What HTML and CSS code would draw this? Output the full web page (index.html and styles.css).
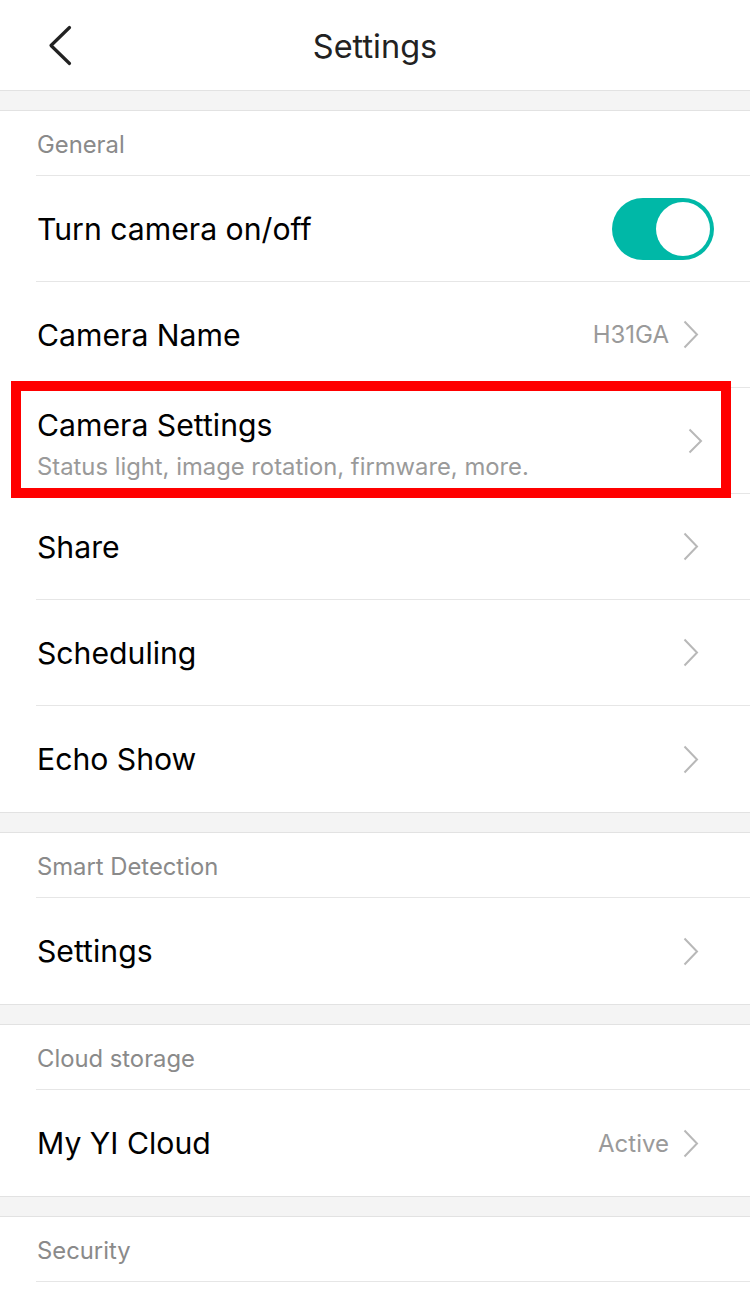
FILE: index.html
```html
<!DOCTYPE html>
<html>
<head>
<meta charset="utf-8">
<link rel="stylesheet" href="styles.css">
</head>
<body>
<div class="page">
  <header class="topbar">
    <svg class="back" width="24" height="41" viewBox="0 0 24 41"><polyline points="21.5,2.5 3,20.5 21.5,38.5" fill="none" stroke="#222" stroke-width="3.2" stroke-linecap="round" stroke-linejoin="round"/></svg>
    <h1 class="title">Settings</h1>
  </header>

  <div class="gap"></div>
  <section class="section">
    <div class="sec-title">General</div>
    <div class="row">
      <span class="label">Turn camera on/off</span>
      <div class="toggle"><div class="knob"></div></div>
    </div>
    <div class="row nav">
      <span class="label">Camera Name</span>
      <span class="value">H31GA</span>
      <svg class="chev" width="16" height="29" viewBox="0 0 16 29"><polyline points="1.5,1.5 14,14.5 1.5,27.5" fill="none" stroke="#b8b8b8" stroke-width="2"/></svg>
    </div>
    <div class="row nav highlighted">
      <div class="stack">
        <span class="label">Camera Settings</span>
        <span class="sub">Status light, image rotation, firmware, more.</span>
      </div>
      <svg class="chev chev-sm" width="15" height="26" viewBox="0 0 15 26"><polyline points="1.5,1.5 13,13 1.5,24.5" fill="none" stroke="#b8b8b8" stroke-width="2"/></svg>
      <div class="mark"></div>
    </div>
    <div class="row nav">
      <span class="label">Share</span>
      <svg class="chev" width="16" height="29" viewBox="0 0 16 29"><polyline points="1.5,1.5 14,14.5 1.5,27.5" fill="none" stroke="#b8b8b8" stroke-width="2"/></svg>
    </div>
    <div class="row nav">
      <span class="label">Scheduling</span>
      <svg class="chev" width="16" height="29" viewBox="0 0 16 29"><polyline points="1.5,1.5 14,14.5 1.5,27.5" fill="none" stroke="#b8b8b8" stroke-width="2"/></svg>
    </div>
    <div class="row nav">
      <span class="label">Echo Show</span>
      <svg class="chev" width="16" height="29" viewBox="0 0 16 29"><polyline points="1.5,1.5 14,14.5 1.5,27.5" fill="none" stroke="#b8b8b8" stroke-width="2"/></svg>
    </div>
  </section>

  <div class="gap"></div>
  <section class="section">
    <div class="sec-title">Smart Detection</div>
    <div class="row nav">
      <span class="label">Settings</span>
      <svg class="chev" width="16" height="29" viewBox="0 0 16 29"><polyline points="1.5,1.5 14,14.5 1.5,27.5" fill="none" stroke="#b8b8b8" stroke-width="2"/></svg>
    </div>
  </section>

  <div class="gap"></div>
  <section class="section">
    <div class="sec-title">Cloud storage</div>
    <div class="row nav">
      <span class="label">My YI Cloud</span>
      <span class="value">Active</span>
      <svg class="chev" width="16" height="29" viewBox="0 0 16 29"><polyline points="1.5,1.5 14,14.5 1.5,27.5" fill="none" stroke="#b8b8b8" stroke-width="2"/></svg>
    </div>
  </section>

  <div class="gap"></div>
  <section class="section last">
    <div class="sec-title">Security</div>
    <div class="row empty"></div>
  </section>
</div>
</body>
</html>
```

FILE: styles.css
```css
* { box-sizing: border-box; }
html, body { margin: 0; padding: 0; background: #fff; }
body {
  font-family: "Inter", "Liberation Sans", Arial, sans-serif;
  color: #000;
  width: 750px;
  overflow: hidden;
}
.page { width: 750px; }

.topbar {
  height: 91px;
  border-bottom: 1px solid #e2e2e2;
  display: flex;
  align-items: center;
  justify-content: center;
  position: relative;
}
.back {
  position: absolute;
  left: 48px;
  top: 25px;
}
.title {
  margin: 0;
  font-weight: 400;
  font-size: 32.5px;
  color: #222;
  padding-top: 2px;
}

.gap {
  height: 19px;
  background: #f4f4f4;
}

.section {
  background: #fff;
  border-top: 1px solid #e2e2e2;
  border-bottom: 1px solid #e2e2e2;
  padding-left: 36px;
}
.section.last { border-bottom: none; }

.sec-title {
  height: 65px;
  border-bottom: 1px solid #e6e6e6;
  display: flex;
  align-items: center;
  padding-left: 1px;
  padding-top: 2px;
  font-size: 23.8px;
  color: #8a8a8a;
}

.row {
  height: 106px;
  border-bottom: 1px solid #e6e6e6;
  display: flex;
  align-items: center;
  padding-left: 1px;
  padding-right: 36px;
  position: relative;
}
.row:last-child { border-bottom: none; }
.row.nav { padding-right: 51px; }
.row.empty { height: 40px; }

.label {
  font-size: 30.2px;
  color: #000;
  flex: 1;
}
.stack {
  flex: 1;
  display: flex;
  flex-direction: column;
  gap: 9px;
  padding-top: 7px;
}
.stack .label { flex: none; }
.sub {
  font-size: 23.8px;
  color: #9a9a9a;
}
.value {
  font-size: 24px;
  color: #9a9a9a;
  margin-right: 14px;
}
.chev { display: block; }
.chev-sm { margin-right: -4px; }

.toggle {
  width: 102px;
  height: 62px;
  border-radius: 31px;
  background: #00b8a7;
  position: relative;
}
.knob {
  position: absolute;
  right: 4px;
  top: 4px;
  width: 54px;
  height: 54px;
  border-radius: 50%;
  background: #fff;
}

.mark {
  position: absolute;
  left: -25px;
  top: -7px;
  right: 19px;
  bottom: -5px;
  border: 10px solid #ff0000;
  pointer-events: none;
}
```
